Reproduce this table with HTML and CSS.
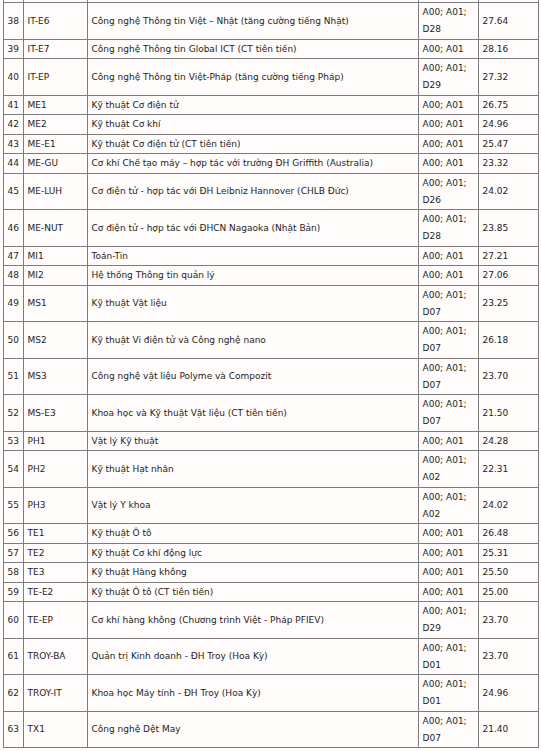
FILE: index.html
```html
<!DOCTYPE html>
<html lang="vi">
<head>
<meta charset="utf-8">
<title>Điểm chuẩn</title>
<link rel="stylesheet" href="styles.css">
</head>
<body>
<table class="scores">
<colgroup><col class="c-no"><col class="c-code"><col class="c-name"><col class="c-grp"><col class="c-score"></colgroup>
<tbody>
<tr class="cut"><td></td><td></td><td></td><td></td><td></td></tr>
<tr><td>38</td><td>IT-E6</td><td>Công nghệ Thông tin Việt – Nhật (tăng cường tiếng Nhật)</td><td>A00; A01;<br>D28</td><td>27.64</td></tr>
<tr><td>39</td><td>IT-E7</td><td>Công nghệ Thông tin Global ICT (CT tiên tiến)</td><td>A00; A01</td><td>28.16</td></tr>
<tr><td>40</td><td>IT-EP</td><td>Công nghệ Thông tin Việt-Pháp (tăng cường tiếng Pháp)</td><td>A00; A01;<br>D29</td><td>27.32</td></tr>
<tr><td>41</td><td>ME1</td><td>Kỹ thuật Cơ điện tử</td><td>A00; A01</td><td>26.75</td></tr>
<tr><td>42</td><td>ME2</td><td>Kỹ thuật Cơ khí</td><td>A00; A01</td><td>24.96</td></tr>
<tr><td>43</td><td>ME-E1</td><td>Kỹ thuật Cơ điện tử (CT tiên tiến)</td><td>A00; A01</td><td>25.47</td></tr>
<tr><td>44</td><td>ME-GU</td><td>Cơ khí Chế tạo máy – hợp tác với trường ĐH Griffith (Australia)</td><td>A00; A01</td><td>23.32</td></tr>
<tr><td>45</td><td>ME-LUH</td><td>Cơ điện tử - hợp tác với ĐH Leibniz Hannover (CHLB Đức)</td><td>A00; A01;<br>D26</td><td>24.02</td></tr>
<tr><td>46</td><td>ME-NUT</td><td>Cơ điện tử - hợp tác với ĐHCN Nagaoka (Nhật Bản)</td><td>A00; A01;<br>D28</td><td>23.85</td></tr>
<tr><td>47</td><td>MI1</td><td>Toán-Tin</td><td>A00; A01</td><td>27.21</td></tr>
<tr><td>48</td><td>MI2</td><td>Hệ thống Thông tin quản lý</td><td>A00; A01</td><td>27.06</td></tr>
<tr><td>49</td><td>MS1</td><td>Kỹ thuật Vật liệu</td><td>A00; A01;<br>D07</td><td>23.25</td></tr>
<tr><td>50</td><td>MS2</td><td>Kỹ thuật Vi điện tử và Công nghệ nano</td><td>A00; A01;<br>D07</td><td>26.18</td></tr>
<tr><td>51</td><td>MS3</td><td>Công nghệ vật liệu Polyme và Compozit</td><td>A00; A01;<br>D07</td><td>23.70</td></tr>
<tr><td>52</td><td>MS-E3</td><td>Khoa học và Kỹ thuật Vật liệu (CT tiên tiến)</td><td>A00; A01;<br>D07</td><td>21.50</td></tr>
<tr><td>53</td><td>PH1</td><td>Vật lý Kỹ thuật</td><td>A00; A01</td><td>24.28</td></tr>
<tr><td>54</td><td>PH2</td><td>Kỹ thuật Hạt nhân</td><td>A00; A01;<br>A02</td><td>22.31</td></tr>
<tr><td>55</td><td>PH3</td><td>Vật lý Y khoa</td><td>A00; A01;<br>A02</td><td>24.02</td></tr>
<tr><td>56</td><td>TE1</td><td>Kỹ thuật Ô tô</td><td>A00; A01</td><td>26.48</td></tr>
<tr><td>57</td><td>TE2</td><td>Kỹ thuật Cơ khí động lực</td><td>A00; A01</td><td>25.31</td></tr>
<tr><td>58</td><td>TE3</td><td>Kỹ thuật Hàng không</td><td>A00; A01</td><td>25.50</td></tr>
<tr><td>59</td><td>TE-E2</td><td>Kỹ thuật Ô tô (CT tiên tiến)</td><td>A00; A01</td><td>25.00</td></tr>
<tr><td>60</td><td>TE-EP</td><td>Cơ khí hàng không (Chương trình Việt - Pháp PFIEV)</td><td>A00; A01;<br>D29</td><td>23.70</td></tr>
<tr><td>61</td><td>TROY-BA</td><td>Quản trị Kinh doanh - ĐH Troy (Hoa Kỳ)</td><td>A00; A01;<br>D01</td><td>23.70</td></tr>
<tr><td>62</td><td>TROY-IT</td><td>Khoa học Máy tính - ĐH Troy (Hoa Kỳ)</td><td>A00; A01;<br>D01</td><td>24.96</td></tr>
<tr><td>63</td><td>TX1</td><td>Công nghệ Dệt May</td><td>A00; A01;<br>D07</td><td>21.40</td></tr>
</tbody>
</table>
</body>
</html>
```

FILE: styles.css
```css
html, body {
  margin: 0;
  padding: 0;
  background: #fffcfb;
}

body {
  padding: 0 0 0 3px;
  font-family: "DejaVu Sans", "Noto Sans", sans-serif;
  font-size: 9px;
  color: #1e1e1e;
}

.scores {
  border-collapse: collapse;
  table-layout: fixed;
  width: 535px;
}

.c-no { width: 20px; }
.c-code { width: 64px; }
.c-name { width: 331px; }
.c-grp { width: 60px; }
.c-score { width: 60px; }

.scores td {
  border: 1px solid #7d7d7d;
  padding: 1px 2px 0.5px 3.5px;
  line-height: 17px;
  vertical-align: middle;
  white-space: nowrap;
  overflow: hidden;
}

.scores tr.cut td {
  border-top: 0;
  height: 2px;
  padding: 0;
  line-height: 0;
  font-size: 0;
}
```
